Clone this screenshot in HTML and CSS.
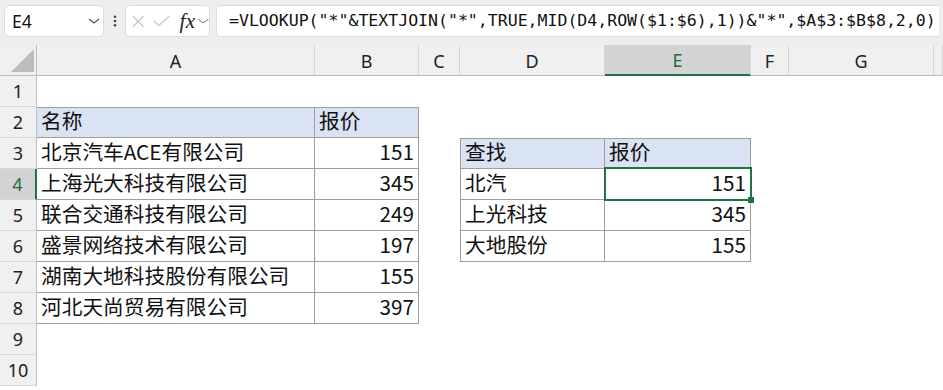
FILE: index.html
```html
<!DOCTYPE html>
<html lang="zh-CN">
<head>
<meta charset="utf-8">
<title>VLOOKUP</title>
<link rel="stylesheet" href="styles.css">
</head>
<body>
<div class="toolbar">
  <div class="namebox">
    <span class="ref">E4</span>
    <svg class="chev" width="12" height="8" viewBox="0 0 12 8"><polyline points="1,2 6,6 11,2" fill="none" stroke="#555" stroke-width="1.2"/></svg>
  </div>
  <div class="dots">
    <svg width="6" height="12" viewBox="0 0 6 12"><circle cx="3" cy="1.8" r="1.3" fill="#444"/><circle cx="3" cy="6" r="1.3" fill="#444"/><circle cx="3" cy="10.2" r="1.3" fill="#444"/></svg>
  </div>
  <div class="fxbox">
    <svg class="ico" width="13" height="13" viewBox="0 0 13 13"><line x1="1" y1="1" x2="12" y2="12" stroke="#c4c4c4" stroke-width="1.2"/><line x1="12" y1="1" x2="1" y2="12" stroke="#c4c4c4" stroke-width="1.2"/></svg>
    <svg class="ico chk" width="18" height="12" viewBox="0 0 18 12"><polyline points="1,6 6,11 17,1" fill="none" stroke="#c4c4c4" stroke-width="1.2"/></svg>
    <span class="fx">fx</span>
    <svg class="chev2" width="13" height="8" viewBox="0 0 13 8"><polyline points="1,2 6.5,6 12,2" fill="none" stroke="#888" stroke-width="1.1"/></svg>
  </div>
  <div class="formula">=VLOOKUP("*"&amp;TEXTJOIN("*",TRUE,MID(D4,ROW($1:$6),1))&amp;"*",$A$3:$B$8,2,0)</div>
</div>
<table class="sheet">
  <colgroup>
    <col class="w-rh"><col class="w-a"><col class="w-b"><col class="w-c"><col class="w-d"><col class="w-e"><col class="w-f"><col class="w-g"><col class="w-h">
  </colgroup>
  <tr class="hdr">
    <th class="corner"><svg width="36" height="30" viewBox="0 0 36 30"><polygon points="34,4 34,27 11,27" fill="#bdbdbd"/></svg></th>
    <th>A</th><th>B</th><th>C</th><th>D</th><th class="csel">E</th><th>F</th><th>G</th><th></th>
  </tr>
  <tr><th class="rh">1</th><td></td><td></td><td></td><td></td><td></td><td></td><td></td><td></td></tr>
  <tr><th class="rh">2</th><td class="t tt th1">名称</td><td class="t tt th1">报价</td><td></td><td></td><td></td><td></td><td></td><td></td></tr>
  <tr><th class="rh">3</th><td class="t">北京汽车ACE有限公司</td><td class="t num">151</td><td></td><td class="t tt tl th1">查找</td><td class="t tt th1">报价</td><td></td><td></td><td></td></tr>
  <tr><th class="rh rsel">4</th><td class="t">上海光大科技有限公司</td><td class="t num">345</td><td></td><td class="t tl">北汽</td><td class="t num active">151<span class="selbox"></span><span class="handle"></span></td><td></td><td></td><td></td></tr>
  <tr><th class="rh">5</th><td class="t">联合交通科技有限公司</td><td class="t num">249</td><td></td><td class="t tl">上光科技</td><td class="t num">345</td><td></td><td></td><td></td></tr>
  <tr><th class="rh">6</th><td class="t">盛景网络技术有限公司</td><td class="t num">197</td><td></td><td class="t tl">大地股份</td><td class="t num">155</td><td></td><td></td><td></td></tr>
  <tr><th class="rh">7</th><td class="t">湖南大地科技股份有限公司</td><td class="t num">155</td><td></td><td></td><td></td><td></td><td></td><td></td></tr>
  <tr><th class="rh">8</th><td class="t">河北天尚贸易有限公司</td><td class="t num">397</td><td></td><td></td><td></td><td></td><td></td><td></td></tr>
  <tr><th class="rh">9</th><td></td><td></td><td></td><td></td><td></td><td></td><td></td><td></td></tr>
  <tr><th class="rh">10</th><td></td><td></td><td></td><td></td><td></td><td></td><td></td><td></td></tr>
</table>
</body>
</html>
```
FILE: styles.css
```css
* { box-sizing: border-box; }
html, body { margin: 0; padding: 0; }
body {
  width: 943px;
  height: 390px;
  overflow: hidden;
  background: #fff;
  font-family: "Noto Sans CJK SC", "Noto Sans", sans-serif;
  color: #111;
}
.toolbar {
  height: 45px;
  background: #eeeeee;
  display: flex;
  align-items: flex-start;
  padding: 5px 4px 0 4px;
}
.namebox {
  width: 100px;
  height: 32px;
  background: #fff;
  border: 1px solid #dcdcdc;
  border-radius: 5px;
  display: flex;
  align-items: center;
  justify-content: space-between;
  padding: 0 3px 0 7px;
}
.ref {
  font-family: "Noto Sans", sans-serif;
  font-size: 17.5px;
  color: #111;
  line-height: 20px;
}
.chev { display: block; }
.dots {
  width: 21px;
  height: 32px;
  display: flex;
  align-items: center;
  justify-content: center;
}
.dots svg { display: block; }
.fxbox {
  width: 85px;
  height: 32px;
  background: #fff;
  border: 1px solid #dcdcdc;
  border-radius: 5px;
  display: flex;
  align-items: center;
  padding: 0 0 0 6px;
  margin-right: 6px;
}
.ico { display: block; }
.chk { margin-left: 9px; }
.fx {
  font-family: "Liberation Serif", serif;
  font-style: italic;
  font-size: 21px;
  line-height: 20px;
  color: #222;
  margin-left: 9px;
  letter-spacing: 0.5px;
}
.chev2 { display: block; margin-left: 1px; }
.formula {
  flex: 1;
  height: 32px;
  background: #fff;
  border: 1px solid #dcdcdc;
  border-right: none;
  border-radius: 5px 0 0 5px;
  padding-left: 12px;
  font-family: "DejaVu Sans Mono", monospace;
  font-size: 16.55px;
  line-height: 30px;
  color: #111;
  white-space: nowrap;
  overflow: hidden;
}
.sheet {
  border-collapse: separate;
  border-spacing: 0;
  table-layout: fixed;
  width: 943px;
}
.w-rh { width: 37px; }
.w-a { width: 278px; }
.w-b { width: 104px; }
.w-c { width: 41px; }
.w-d { width: 145px; }
.w-e { width: 146px; }
.w-f { width: 38px; }
.w-g { width: 145px; }
.w-h { width: 9px; }
.sheet tr { height: 31px; }
.sheet th, .sheet td { padding: 0; }
.hdr th {
  height: 31px;
  background: #f0f0f0;
  border-right: 1px solid #d6d6d6;
  border-bottom: 1px solid #bdbdbd;
  font-family: "Noto Sans", sans-serif;
  font-weight: normal;
  font-size: 18px;
  color: #222;
  text-align: center;
  vertical-align: middle;
  line-height: 28px;
  padding-top: 1px;
}
.hdr th.corner { padding: 0; border-right: 1px solid #bdbdbd; }
.corner svg { display: block; }
.hdr th.csel {
  background: #d3d3d3;
  color: #1e6b41;
  border-bottom: 2px solid #217346;
  line-height: 27px;
}
.rh {
  background: #f0f0f0;
  border-right: 1px solid #bdbdbd;
  border-bottom: 1px solid #d9d9d9;
  font-family: "Noto Sans", sans-serif;
  font-weight: normal;
  font-size: 18px;
  color: #222;
  text-align: center;
  vertical-align: middle;
  line-height: 28px;
  padding-top: 1px;
}
.rh.rsel {
  background: #d3d3d3;
  color: #1e6b41;
  border-right: 2px solid #217346;
}
.sheet td {
  font-size: 20.7px;
  line-height: 24px;
  vertical-align: top;
  padding: 1px 4px 0 4px;
  white-space: nowrap;
  overflow: visible;
  color: #111;
}
.t {
  border-right: 1px solid #9e9e9e;
  border-bottom: 1px solid #9e9e9e;
}
.tt { border-top: 1px solid #9e9e9e; }
.sheet td.tt { padding-top: 0; }
.tl { border-left: 1px solid #9e9e9e; }
.th1 { background: #dae3f3; }
.num { text-align: right; }
.active { position: relative; }
.selbox {
  position: absolute;
  top: -2px;
  left: -1px;
  right: -2px;
  bottom: -2px;
  border: 2px solid #217346;
}
.handle {
  position: absolute;
  right: -4px;
  bottom: -4px;
  width: 6px;
  height: 6px;
  background: #217346;
}
```
